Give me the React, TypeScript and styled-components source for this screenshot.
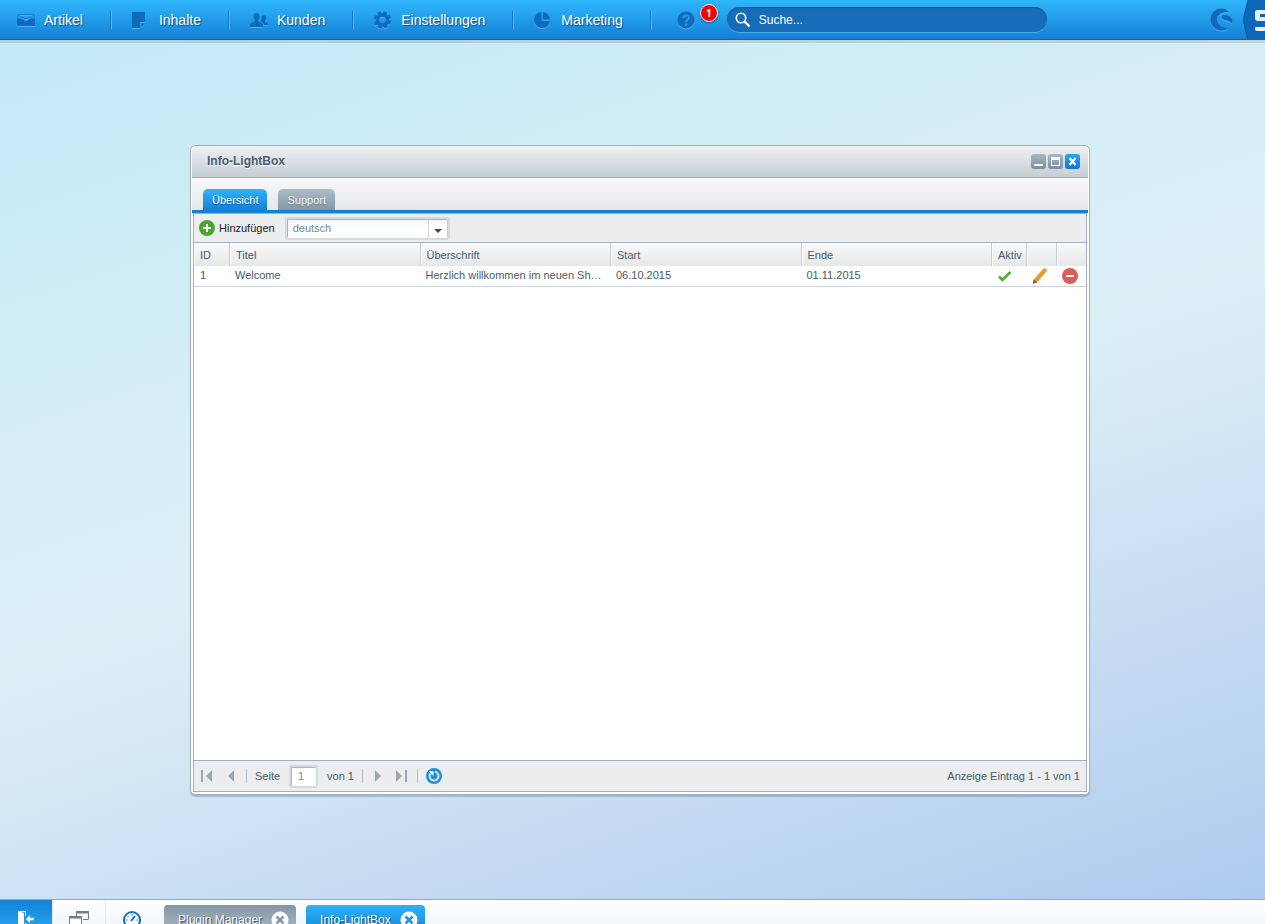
import React from 'react';
import styled, { createGlobalStyle } from 'styled-components';

const GlobalStyle = createGlobalStyle`
  *, *::before, *::after { box-sizing: border-box; }
  html, body { margin: 0; padding: 0; }
  body, button, input, select {
    font-family: "Liberation Sans", Arial, Helvetica, sans-serif;
    font-size: 11px;
  }
  button { border: 0; padding: 0; background: none; cursor: pointer; }
  svg { display: block; }
`;

const line = '#9fb0bf';
const text = '#475c6a';

const Shell = styled.div`
  display: flex;
  flex-direction: column;
  height: 100vh;
  overflow: hidden;
  background: linear-gradient(162deg, #c1e9f6 0%, #def0f6 50%, #adc9ef 100%);
`;

/* ---------- top bar ---------- */

const TopBar = styled.header`
  display: flex;
  align-items: center;
  height: 40px;
  flex: none;
  background: linear-gradient(#2fb7fc, #1480d5);
  border-bottom: 1px solid #0c67b8;
  box-shadow: 0 3px 0 rgba(120, 130, 140, 0.25);
  overflow: hidden;
`;

const Nav = styled.nav`
  display: flex;
  align-items: center;
  flex: none;
  margin-left: -3px;
`;

const NavItem = styled.button`
  display: flex;
  align-items: center;
  gap: 9px;
  height: 18px;
  padding: 0 27px 0 20px;
  border-right: 1px solid #1a78c8;
  box-shadow: 1px 0 0 #55b6f3;
  margin-right: 1px;
  color: #fff;
  font-size: 14px;
  line-height: 18px;
  text-shadow: 1px 1px 1px #0b4f92;
`;

const Embossed = styled.svg`
  color: #0f6bb9;
  flex: none;
  overflow: visible;
  filter: drop-shadow(0 1px 0 #46b0f4);
`;

const HelpButton = styled.button`
  position: relative;
  flex: none;
  margin: 0 32px 0 25px;
`;

const Badge = styled.span`
  position: absolute;
  left: 23px;
  top: -7px;
  width: 18px;
  height: 18px;
  border: 1px solid #fff;
  border-radius: 9px;
  background: #f60000;
  color: #fff;
  font: bold 10px/16px "Open Sans", sans-serif;
  text-align: center;
  box-shadow: 0 1px 2px rgba(0, 40, 90, 0.6);
`;

const Search = styled.label`
  display: flex;
  align-items: center;
  gap: 8px;
  width: 320px;
  height: 25px;
  padding: 0 8px;
  border-radius: 13px;
  background: #176cb8;
  box-shadow: inset 0 1px 1px #0f559a, 0 1px 0 #42a8f3;
`;

const SearchInput = styled.input`
  flex: 1;
  min-width: 0;
  border: 0;
  padding: 0;
  outline: 0;
  background: transparent;
  color: #fff;
  font-size: 12px;
  &::placeholder { color: #fff; opacity: 1; }
`;

const Brand = styled.div`
  display: flex;
  align-items: center;
  gap: 10px;
  margin-left: auto;
  flex: none;
`;

/* ---------- window ---------- */

const Desktop = styled.main`
  position: relative;
  flex: 1;
  min-height: 0;
`;

const Window = styled.section`
  position: absolute;
  inset: 105px 175px 104px 190px;
  display: flex;
  flex-direction: column;
  border: 1px solid ${line};
  border-radius: 5px;
  background: #fff;
  box-shadow: 0 2px 1px rgba(90, 110, 140, 0.35);
  padding: 0 1px 2px;
  color: ${text};
`;

const TitleBar = styled.div`
  display: flex;
  align-items: center;
  gap: 2px;
  height: 32px;
  padding: 0 8px 0 15px;
  border-bottom: 1px solid ${line};
  border-radius: 4px 4px 0 0;
  background: linear-gradient(#f0f1f3, #c5cdd4);
`;

const Title = styled.h1`
  flex: 1;
  margin: 0;
  padding-bottom: 2px;
  font-size: 12px;
  line-height: 16px;
  color: ${text};
  text-shadow: 0 1px 0 #fff;
`;

const WindowButton = styled.button<{ $primary?: boolean }>`
  width: 15px;
  height: 15px;
  border-radius: 3px;
  background: ${p => (p.$primary ? 'linear-gradient(#22a8f8, #0c78d0)' : 'linear-gradient(#a9b8c3, #7b8fa0)')};
`;

const TabBar = styled.div`
  display: flex;
  align-items: flex-end;
  gap: 11px;
  height: 35px;
  padding: 0 11px;
  border-bottom: 3px solid #1480d5;
  background: linear-gradient(#f9f9fa, #e4e6e9);
`;

const Tab = styled.button<{ $active?: boolean }>`
  height: 21px;
  padding: 1px 9px 0;
  border-radius: 5px 5px 0 0;
  color: ${p => (p.$active ? '#fff' : '#eef2f5')};
  line-height: 20px;
  text-shadow: ${p => (p.$active ? '0 1px 1px #0a4ea0' : '0 1px 1px #6c8090')};
  background: ${p => (p.$active ? 'linear-gradient(#2fb4fa, #1480d5)' : 'linear-gradient(#adbcc6, #8398a8)')};
`;

const Panel = styled.div`
  flex: 1;
  display: flex;
  flex-direction: column;
  min-height: 0;
  margin: 0 1px;
  border: 1px solid ${line};
`;

const Toolbar = styled.div`
  display: flex;
  align-items: center;
  gap: 10px;
  height: 29px;
  padding: 0 5px;
  border-bottom: 1px solid ${line};
  background: #ebedee;
`;

const AddButton = styled.button`
  display: flex;
  align-items: center;
  gap: 4px;
  color: #222;
`;

const SelectBox = styled.span`
  display: flex;
  position: relative;
  width: 165px;
  height: 23px;
  border: 2px solid #d4dade;
  border-radius: 3px;
`;

const Select = styled.select`
  appearance: none;
  width: 100%;
  padding: 0 26px 0 5px;
  border: 1px solid #a9b7c2;
  border-color: #a9b7c2 #c4ccd3 #fff #a9b7c2;
  border-radius: 2px;
  outline: 0;
  background: linear-gradient(#f1f3f4, #fff 6px);
  color: #73899a;
`;

const Arrow = styled.span`
  position: absolute;
  inset: 1px 1px 0 auto;
  width: 19px;
  border-left: 1px solid #d2d8dd;
  pointer-events: none;
  display: grid;
  place-items: center;
  padding-top: 4px;
`;

const Grid = styled.table`
  width: 100%;
  table-layout: fixed;
  border-collapse: separate;
  border-spacing: 0;
`;

const HeadCell = styled.th<{ $width?: number }>`
  width: ${p => (p.$width ? `${p.$width}px` : 'auto')};
  height: 23px;
  padding: 0 0 0 6px;
  text-align: left;
  font-weight: normal;
  background: linear-gradient(#f9f9fa, #e5e7e9);
  border-right: 1px solid #c6ccd2;
  box-shadow: inset 1px 1px 0 #fff;
  white-space: nowrap;
  &:last-child { border-right: 0; }
`;

const Cell = styled.td`
  height: 21px;
  padding: 0 8px 2px 5px;
  border-bottom: 1px solid #c9d4dc;
  overflow: hidden;
  text-overflow: ellipsis;
  white-space: nowrap;
  &:first-child { padding-left: 6px; }
`;

const IconCell = styled(Cell)`
  padding: 0 0 0 5px;
`;

const RowButton = styled.button`
  display: block;
`;

const Pager = styled.div`
  display: flex;
  align-items: center;
  gap: 8px;
  height: 31px;
  margin-top: auto;
  padding: 0 6px;
  border-top: 1px solid ${line};
  background: #ebedee;
`;

const PagerButton = styled.button`
  width: 15px;
  height: 16px;
  color: #9ba8b3;
`;

const Divider = styled.i`
  width: 1px;
  height: 14px;
  background: #b3bdc6;
`;

const PageInput = styled.input`
  width: 25px;
  height: 19px;
  margin: 0 3px;
  padding: 0 6px;
  border: 1px solid #fff;
  border-color: #a9b7c2 #fff #fff #a9b7c2;
  border-radius: 1px;
  box-shadow: 0 0 0 2px #d4dade;
  color: #73899a;
  background: #fff;
`;

const PagerInfo = styled.span`
  margin-left: auto;
`;

/* ---------- task bar ---------- */

const TaskBar = styled.footer`
  flex: none;
  height: 25px;
  overflow: hidden;
  border-top: 1px solid #8ba9ca;
`;

const TaskRow = styled.div`
  display: flex;
  align-items: center;
  height: 40px;
  background: linear-gradient(#fff, #eaf1f9);
`;

const TaskTool = styled.button<{ $start?: boolean }>`
  display: grid;
  place-items: center;
  width: ${p => (p.$start ? 52 : 53)}px;
  height: 40px;
  border-left: ${p => (p.$start ? '0' : '1px solid #e3e8f0')};
  background: ${p => (p.$start ? 'linear-gradient(#1480d5, #2fb4fa)' : 'transparent')};
`;

const Task = styled.div<{ $active?: boolean }>`
  display: flex;
  align-items: center;
  gap: 9px;
  height: 30px;
  margin: 0 4px 0 6px;
  padding: 0 7px 0 14px;
  border-radius: 4px;
  background: ${p => (p.$active ? 'linear-gradient(#2cb2fa, #1480d5)' : 'linear-gradient(#8297a7, #adbcc6)')};
`;

const TaskLabel = styled.button`
  color: #fff;
  font-size: 12px;
  line-height: 16px;
  text-shadow: 1px 1px 1px rgba(20, 50, 80, 0.8);
`;

/* ---------- icons ---------- */

const InboxIcon = () => (
  <Embossed width="18" height="18" viewBox="0 0 18 18" aria-hidden="true">
    <path d="M1 8V4.500L2.500 3.500h13L17 4.500V8" fill="none" stroke="#1577c7" strokeWidth="1.200" />
    <path d="M0 7.500h4.500l1.500.8L7.500 10h3L12 8.300l1.500-.8H18v6.700c0 .5-.4.800-1 .8H1c-.6 0-1-.3-1-.8z" fill="currentColor" />
    <path d="M2.500 6h3l1.500 1.500h4L12.500 6h3" fill="none" stroke="#1577c7" />
  </Embossed>
);
const PageIcon = () => (
  <Embossed width="18" height="18" viewBox="0 0 18 18" fill="currentColor" aria-hidden="true">
    <path d="M0 1h13v10H8v6H0z" />
    <path d="M9.500 12.500H13L9.500 16z" />
  </Embossed>
);
const UsersIcon = () => (
  <Embossed width="18" height="18" viewBox="0 0 18 18" fill="currentColor" aria-hidden="true">
    <path d="M6.500 2c2.300 0 3 1.500 3 3.500C9.500 7 9 8 8.300 8.800v1.700c1 .8 4.200 1 4.700 2.800V16H0v-2.700c.5-1.800 3.500-2 4.500-2.800V8.800C3.800 8 3.500 7 3.500 5.500 3.500 3.500 4.200 2 6.500 2z" />
    <path d="M10.800 9.800c.6-.8.700-2 .7-4 .5-1.200 1.500-1.500 2.200-1.500 1.800 0 2.500 1.200 2.500 2.800 0 1.200-.4 2-1 2.600v1.300c.8.500 2.500.8 2.800 1.800V14h-4c-.3-1.500-1.500-2.500-3.200-3z" />
  </Embossed>
);
const GearIcon = () => (
  <Embossed width="18" height="18" viewBox="0 0 18 18" aria-hidden="true">
    <circle cx="8.500" cy="9" r="5" fill="none" stroke="currentColor" strokeWidth="3.600" />
    <g fill="currentColor">
      {[20, 65, 110, 155, 200, 245, 290, 335].map(a => (
        <path key={a} d="M6.800.300h3.400l.6 2.700h-4.600z" transform={`rotate(${a} 8.500 9)`} />
      ))}
    </g>
  </Embossed>
);
const PieIcon = () => (
  <Embossed width="18" height="18" viewBox="0 0 18 18" fill="currentColor" aria-hidden="true">
    <path d="M7.500 1v9H16A8 8 0 1 1 7.500 1z" />
    <path d="M9 1a8 8 0 0 1 7 7.500H9z" />
  </Embossed>
);
const HelpIcon = () => (
  <Embossed width="18" height="18" viewBox="0 0 18 18" aria-hidden="true">
    <circle cx="9" cy="9" r="8.500" fill="currentColor" />
    <path d="M6.300 7.200c0-3.500 5.600-3.500 5.600-.5C11.900 8.700 9 8.700 9 11" fill="none" stroke="#2c98e6" strokeWidth="2" />
    <circle cx="9" cy="13.500" r="1.300" fill="#2c98e6" />
  </Embossed>
);
const SearchIcon = () => (
  <svg width="16" height="16" viewBox="0 0 16 16" fill="none" stroke="#fff" aria-hidden="true">
    <circle cx="6" cy="6" r="4.700" strokeWidth="1.600" />
    <path d="M9.500 9.500l5 5" strokeWidth="2.400" />
  </svg>
);
const SwirlLogo = () => (
  <Embossed width="23" height="24" viewBox="0 0 23 24" fill="currentColor" aria-hidden="true">
    <path d="M19 4C17 1.500 14.500.500 11.500.500a11 11 0 0 0 0 22c3 0 5.500-1 7-2.200C12 20 7 17 7 11.500 7 6.500 12 3.500 19 4z" />
    <path d="M11.500 9c0-2 3-2.500 6-1.500 3 1 4.700 3 5 5.500l-.8 2.500c-2.500-3.500-10-3-10.200-6.500z" />
  </Embossed>
);
const Ribbon = () => (
  <svg width="22" height="40" viewBox="0 0 22 40" aria-hidden="true">
    <path d="M5 0h17v40H5L0 20z" fill="#0c67b8" />
    <path d="M5 0L0 20l5 20" fill="none" stroke="#0a559d" />
    <path d="M22 10h-8q-2 0-2 2v6q0 3 3 3h7v-4h-5v-3h5zM12 27h10v4H14q-2 0-2-2z" fill="#e9eff5" />
  </svg>
);
const RoundIcon = ({ color, minus }: { color: string; minus?: boolean }) => (
  <svg width="16" height="16" viewBox="0 0 16 16" aria-hidden="true">
    <circle cx="8" cy="8" r="8" fill={color} />
    {minus ? <path d="M4 7h8v2H4z" fill="#fff" /> : <path d="M7 4h2v3h3v2H9v3H7V9H4V7h3z" fill="#fff" />}
  </svg>
);
const RefreshIcon = () => (
  <svg width="16" height="16" viewBox="0 0 16 16" aria-hidden="true">
    <circle cx="8" cy="8" r="8" fill="#1b93d8" />
    <path d="M9 3.600A4.500 4.500 0 1 1 4.300 5.500" fill="none" stroke="#fff" strokeWidth="1.700" />
    <path d="M3 3.200h4.500v4.500L5.800 6.300z" fill="#fff" />
  </svg>
);
const CloseIcon = ({ color }: { color: string }) => (
  <svg width="18" height="18" viewBox="0 0 18 18" aria-hidden="true">
    <circle cx="9" cy="9" r="8.500" fill="#fff" />
    <path d="M5.500 5.500l7 7M12.500 5.500l-7 7" stroke={color} strokeWidth="2.500" />
  </svg>
);

const navItems = [
  { label: 'Artikel', Icon: InboxIcon },
  { label: 'Inhalte', Icon: PageIcon },
  { label: 'Kunden', Icon: UsersIcon },
  { label: 'Einstellungen', Icon: GearIcon },
  { label: 'Marketing', Icon: PieIcon },
];

export default function App() {
  return (
    <>
      <GlobalStyle />
      <Shell>
        <TopBar>
          <Nav>
            {navItems.map(({ label, Icon }) => (
              <NavItem key={label}><Icon />{label}</NavItem>
            ))}
          </Nav>
          <HelpButton aria-label="Hilfe">
            <HelpIcon />
            <Badge>1</Badge>
          </HelpButton>
          <Search>
            <SearchIcon />
            <SearchInput type="text" placeholder="Suche..." aria-label="Suche" />
          </Search>
          <Brand><SwirlLogo /><Ribbon /></Brand>
        </TopBar>

        <Desktop>
          <Window>
            <TitleBar>
              <Title>Info-LightBox</Title>
              <WindowButton aria-label="Minimieren">
                <svg width="15" height="15" aria-hidden="true"><path d="M3 10h9v2H3z" fill="#fff" /></svg>
              </WindowButton>
              <WindowButton aria-label="Maximieren">
                <svg width="15" height="15" aria-hidden="true"><path d="M3 3h9v9H3zM4 6v5h7V6z" fill="#fff" fillRule="evenodd" /></svg>
              </WindowButton>
              <WindowButton $primary aria-label="Schließen">
                <svg width="15" height="15" aria-hidden="true"><path d="M4.500 4l6 7M10.500 4l-6 7" stroke="#fff" strokeWidth="2.200" /></svg>
              </WindowButton>
            </TitleBar>
            <TabBar>
              <Tab $active>Übersicht</Tab>
              <Tab>Support</Tab>
            </TabBar>
            <Panel>
              <Toolbar>
                <AddButton><RoundIcon color="#4aa82f" />Hinzufügen</AddButton>
                <SelectBox>
                  <Select aria-label="Sprache" defaultValue="deutsch"><option>deutsch</option></Select>
                  <Arrow>
                    <svg width="8" height="4" aria-hidden="true"><path d="M0 0h8L4 4z" fill="#3b4854" /></svg>
                  </Arrow>
                </SelectBox>
              </Toolbar>
              <Grid>
                <thead>
                  <tr>
                    <HeadCell $width={36}>ID</HeadCell>
                    <HeadCell>Titel</HeadCell>
                    <HeadCell>Überschrift</HeadCell>
                    <HeadCell>Start</HeadCell>
                    <HeadCell>Ende</HeadCell>
                    <HeadCell $width={35}>Aktiv</HeadCell>
                    <HeadCell $width={30} />
                    <HeadCell $width={29} />
                  </tr>
                </thead>
                <tbody>
                  <tr>
                    <Cell>1</Cell>
                    <Cell>Welcome</Cell>
                    <Cell>Herzlich willkommen im neuen Shopsystem</Cell>
                    <Cell>06.10.2015</Cell>
                    <Cell>01.11.2015</Cell>
                    <IconCell>
                      <svg width="16" height="16" viewBox="0 0 16 16" role="img" aria-label="Aktiv">
                        <path d="M2 8.500L5.500 12l8-8" fill="none" stroke="#4fae33" strokeWidth="2.600" />
                      </svg>
                    </IconCell>
                    <IconCell>
                      <RowButton aria-label="Bearbeiten">
                        <svg width="16" height="16" viewBox="0 0 16 16" aria-hidden="true">
                          <path d="M1 16l.8-4.500L4.500 14z" fill="#7a4a33" />
                          <path d="M1.800 11.500L11 1l3.500 2.500L5 14.500z" fill="#e99a2f" />
                          <path d="M1.800 11.500L5 14.500l-2 .8-1.800-.8z" fill="#96583a" />
                          <path d="M11 1q1-1.500 2.800-.3T14.500 3.500z" fill="#e78f2e" />
                        </svg>
                      </RowButton>
                    </IconCell>
                    <IconCell>
                      <RowButton aria-label="Löschen"><RoundIcon color="#df5b5c" minus /></RowButton>
                    </IconCell>
                  </tr>
                </tbody>
              </Grid>
              <Pager>
                <PagerButton aria-label="Erste Seite">
                  <svg width="15" height="16" fill="currentColor" aria-hidden="true"><path d="M1 2h2v12H1zM12 2v12L6 8z" /></svg>
                </PagerButton>
                <PagerButton aria-label="Vorherige Seite">
                  <svg width="15" height="16" fill="currentColor" aria-hidden="true"><path d="M11 2v12L5 8z" /></svg>
                </PagerButton>
                <Divider />
                <label htmlFor="page">Seite</label>
                <PageInput id="page" type="text" defaultValue="1" />
                <span>von 1</span>
                <Divider />
                <PagerButton aria-label="Nächste Seite">
                  <svg width="15" height="16" fill="currentColor" aria-hidden="true"><path d="M4 2v12l6-6z" /></svg>
                </PagerButton>
                <PagerButton aria-label="Letzte Seite">
                  <svg width="15" height="16" fill="currentColor" aria-hidden="true"><path d="M2 2v12l6-6zM11 2h2v12h-2z" /></svg>
                </PagerButton>
                <Divider />
                <PagerButton aria-label="Aktualisieren"><RefreshIcon /></PagerButton>
                <PagerInfo>Anzeige Eintrag 1 - 1 von 1</PagerInfo>
              </Pager>
            </Panel>
          </Window>
        </Desktop>

        <TaskBar>
          <TaskRow>
            <TaskTool $start aria-label="Abmelden">
              <svg width="16" height="18" viewBox="0 0 16 18" fill="#fff" aria-hidden="true">
                <path d="M0 0l6 2v15l-6-2zM1 0h7v5H7V1H3zM7 12h1v3H7zM8 8l4-4v2.800h4v2.500h-4V12z" />
              </svg>
            </TaskTool>
            <TaskTool aria-label="Fenster">
              <svg width="20" height="18" viewBox="0 0 20 18" fill="none" stroke="#6f7d8c" aria-hidden="true">
                <path d="M7.500 6V.5h12v8H14" /><path d="M7 1.500h13" strokeWidth="2" />
                <path d="M.5 5.500h12v9H.5z" fill="#fff" /><path d="M0 6.500h13" strokeWidth="2" />
              </svg>
            </TaskTool>
            <TaskTool aria-label="Status">
              <svg width="18" height="18" viewBox="0 0 18 18" fill="none" stroke="#0f70bd" aria-hidden="true">
                <circle cx="9" cy="9" r="8" strokeWidth="2" fill="#fff" />
                <path d="M8 10l4-5" strokeWidth="2" />
                <path d="M9 3v1.500M4.500 5l1 1M3 9h1.500M15 9h-1.500" />
              </svg>
            </TaskTool>
            <Task>
              <TaskLabel>Plugin Manager</TaskLabel>
              <button aria-label="Plugin Manager schließen"><CloseIcon color="#8699a8" /></button>
            </Task>
            <Task $active>
              <TaskLabel>Info-LightBox</TaskLabel>
              <button aria-label="Info-LightBox schließen"><CloseIcon color="#1f93e3" /></button>
            </Task>
          </TaskRow>
        </TaskBar>
      </Shell>
    </>
  );
}
